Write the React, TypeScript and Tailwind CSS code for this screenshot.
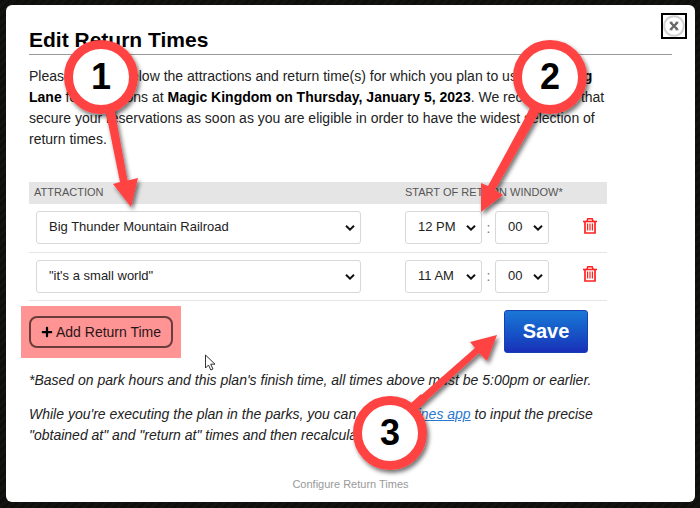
import { useState } from 'react';
import { FaPlus } from 'react-icons/fa';

interface IReturnTime {
  id: number;
  attraction: string;
  hour: string;
  minute: string;
}

const attractions = ['Big Thunder Mountain Railroad', '"it\'s a small world"'];
const hours = ['9 AM', '10 AM', '11 AM', '12 PM', '1 PM', '2 PM', '3 PM'];
const minutes = ['00', '15', '30', '45'];

const initialTimes: IReturnTime[] = [
  { id: 1, attraction: attractions[0], hour: '12 PM', minute: '00' },
  { id: 2, attraction: attractions[1], hour: '11 AM', minute: '00' },
];

function SelectField({
  label,
  value,
  options,
  className,
  onChange,
}: {
  label: string;
  value: string;
  options: string[];
  className: string;
  onChange: (value: string) => void;
}) {
  return (
    <div className={`relative ${className}`}>
      <select
        aria-label={label}
        value={value}
        onChange={e => onChange(e.target.value)}
        className="block h-[33px] w-full appearance-none rounded-[3px] border border-[#d8d8d8] bg-white pl-3 text-[13px] text-[#222]"
      >
        {options.map(option => (
          <option key={option}>{option}</option>
        ))}
      </select>
      <svg
        viewBox="0 0 10 6"
        className="pointer-events-none absolute top-[14px] right-[6px] h-[6px] w-[10px]"
        fill="none"
        stroke="#111"
        strokeWidth="2"
      >
        <path d="M1 .8 5 4.6 9 .8" />
      </svg>
    </div>
  );
}

function TrashIcon() {
  return (
    <svg viewBox="0 0 14 16" className="h-4 w-[14px]" fill="none" stroke="#ff2222">
      <path d="M0 3.500h14" strokeWidth="1.600" />
      <path d="M4 3.200 4.800.8h4.400L10 3.200" strokeWidth="1.500" />
      <path d="M2 3.500v11.500h10V3.500" strokeWidth="1.700" />
      <path d="M4.600 5.500v7M7 5.500v7M9.400 5.500v7" strokeWidth="1.200" />
    </svg>
  );
}

function Callouts() {
  return (
    <svg
      viewBox="0 0 700 508"
      className="pointer-events-none absolute top-0 left-0 h-[508px] w-[700px]"
    >
      <defs>
        <filter id="shadow" x="-20%" y="-20%" width="150%" height="150%">
          <feDropShadow dx="2" dy="3" stdDeviation="2" floodOpacity="0.55" />
        </filter>
      </defs>
      <g fill="#ff4343" filter="url(#shadow)">
        <path d="M105 108 114 107 127.500 180.500 138 178 131 207 113 184 120 182Z" />
        <path d="M531 107 540 111 495 190 503 195 481 212 481 183 488 186Z" />
        <path d="M410 405 415 411 479 353 487 361 497 335 470 342 475 348Z" />
      </g>
      <g fill="#fff" stroke="#ff4343" strokeWidth="9" filter="url(#shadow)">
        <circle cx="101" cy="77" r="32.500" />
        <circle cx="550" cy="77" r="32.500" />
        <circle cx="390" cy="433" r="32.500" />
      </g>
      <g fill="#ff4343">
        <path d="M105 108h9l3 14-9 1Z" />
        <path d="M531 106l9 4-7 13-8-5Z" />
        <path d="M409 405l6 7 12-11-6-7Z" />
      </g>
      <g
        className="font-['Liberation_Sans',Arial,sans-serif] text-4xl font-bold"
        textAnchor="middle"
      >
        <text x="101" y="89">1</text>
        <text x="550" y="89">2</text>
        <text x="390" y="445">3</text>
      </g>
      <path
        d="M205.500 355v13l3-3 2.300 5 2.200-1-2.300-4.800h4.300Z"
        fill="#fff"
        stroke="#333"
      />
    </svg>
  );
}

export default function App() {
  const [times, setTimes] = useState(initialTimes);

  const updateTime = (id: number, changes: Partial<IReturnTime>) =>
    setTimes(times.map(time => (time.id === id ? { ...time, ...changes } : time)));

  const addTime = () =>
    setTimes([
      ...times,
      { id: Date.now(), attraction: attractions[0], hour: '12 PM', minute: '00' },
    ]);

  return (
    <div className="relative flex min-h-screen bg-[#11110f] bg-[repeating-linear-gradient(135deg,#0e0e0d_0px,#0e0e0d_3px,#131312_3px,#131312_6px)] pt-[5px] pr-[5px] pb-[6px] pl-[6px] font-['Liberation_Sans',Arial,sans-serif] text-sm text-[#222]">
      <main className="relative flex grow flex-col rounded-md bg-white px-[23px] pt-5">
        <button
          type="button"
          aria-label="Close"
          className="absolute top-2 right-2 flex size-[26px] items-center justify-center border-2 border-black bg-white"
        >
          <svg viewBox="0 0 22 22" className="size-[22px]" fill="none">
            <circle cx="11" cy="11" r="9.800" stroke="#d2d2d2" strokeWidth="2" />
            <path
              d="M7.500 7.500l7 7M14.500 7.500l-7 7"
              stroke="#666"
              strokeWidth="2.400"
            />
            <path d="M6.500 7.200h3M12.500 7.200h3M6.500 14.800h3M12.500 14.800h3" stroke="#666" />
          </svg>
        </button>

        <h2 className="border-b border-[#999] text-[21px] leading-[29px] font-bold text-black">
          Edit Return Times
        </h2>

        <p className="mt-[11px] max-w-[578px] leading-[21px]">
          Please specify below the attractions and return time(s) for which you plan
          to use <b className="text-black">Lightning Lane</b> for selections at{' '}
          <b className="text-black">Magic Kingdom on Thursday, January 5, 2023</b>.
          We recommend that secure your reservations as soon as you are eligible in
          order to have the widest selection of return times.
        </p>

        <table className="mt-8 w-full max-w-[578px] table-fixed border-collapse">
          <thead>
            <tr className="h-[22px] bg-[#e5e5e5] text-left text-[11px] text-[#555]">
              <th className="pl-[5px] font-normal">ATTRACTION</th>
              <th className="w-[172px] font-normal">
                <span className="whitespace-nowrap">START OF RETURN WINDOW*</span>
              </th>
              <th className="w-[30px]" aria-label="Remove" />
            </tr>
          </thead>
          <tbody>
            {times.map(time => (
              <tr key={time.id} className="h-12 border-b border-[#e5e5e5]">
                <td className="pr-11 pl-[7px]">
                  <SelectField
                    label="Attraction"
                    value={time.attraction}
                    options={attractions}
                    className="w-full"
                    onChange={attraction => updateTime(time.id, { attraction })}
                  />
                </td>
                <td>
                  <div className="flex items-center">
                    <SelectField
                      label="Hour"
                      value={time.hour}
                      options={hours}
                      className="w-[77px]"
                      onChange={hour => updateTime(time.id, { hour })}
                    />
                    <span className="w-[13px] text-center text-[#777]">:</span>
                    <SelectField
                      label="Minute"
                      value={time.minute}
                      options={minutes}
                      className="w-[54px]"
                      onChange={minute => updateTime(time.id, { minute })}
                    />
                  </div>
                </td>
                <td>
                  <button
                    type="button"
                    aria-label="Remove return time"
                    className="mb-1 block pl-[6px]"
                    onClick={() => setTimes(times.filter(t => t.id !== time.id))}
                  >
                    <TrashIcon />
                  </button>
                </td>
              </tr>
            ))}
          </tbody>
        </table>

        <div className="mt-[5px] flex max-w-[578px] items-start justify-between">
          <div className="-ml-2 bg-[#ff9494] px-2 py-[10px]">
            <button
              type="button"
              onClick={addTime}
              className="flex h-8 w-36 items-center justify-center gap-[3px] rounded-lg border-2 border-[#6b3c3c] text-[#2b1616]"
            >
              <FaPlus className="size-3 text-black" />
              Add Return Time
            </button>
          </div>
          <button
            type="button"
            className="mt-1 mr-[19px] h-[43px] w-[84px] rounded-[3px] border border-[#1a3fb5] bg-linear-to-b from-[#1b78d6] to-[#1a2fb8] text-xl font-bold text-white"
          >
            Save
          </button>
        </div>

        <p className="mt-3 leading-[21px] italic">
          *Based on park hours and this plan's finish time, all times above must be
          5:00pm or earlier.
        </p>
        <p className="mt-[13px] max-w-[578px] leading-[21px] italic">
          While you're executing the plan in the parks, you can use the{' '}
          <a href="#lines" className="text-[#2a78d0] underline">
            Lines app
          </a>{' '}
          to input the precise "obtained at" and "return at" times and then
          recalculate the plan.
        </p>

        <p className="mt-auto pb-[10px] text-center text-[11px] leading-4 text-[#999]">
          Configure Return Times
        </p>
      </main>
      <Callouts />
    </div>
  );
}
